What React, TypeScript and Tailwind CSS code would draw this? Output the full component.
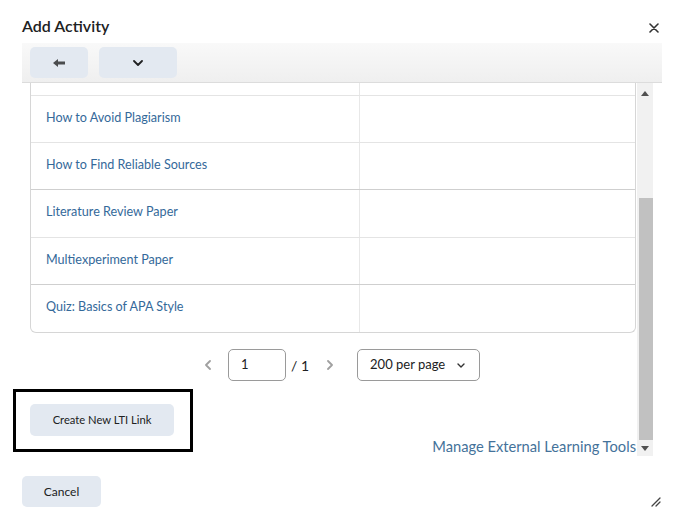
import { ReactNode } from "react";

const rows = [
    { title: "How to Avoid Plagiarism", h: "h-[47px]", line: "border-[#e4e4e4]" },
    { title: "How to Find Reliable Sources", h: "h-[47px]", line: "border-[#cfcfcf]" },
    { title: "Literature Review Paper", h: "h-[48px]", line: "border-[#e4e4e4]" },
    { title: "Multiexperiment Paper", h: "h-[47px]", line: "border-[#cfcfcf]" },
    { title: "Quiz: Basics of APA Style", h: "h-[47px]", line: "border-[#cfcfcf]" },
];

function GreyButton({ className, children }: { className: string, children: ReactNode }) {
    return <button className={`flex items-center justify-center rounded-[5px] bg-[#e3e9f1] text-[#202122] ${className}`}>
        {children}
    </button>
}

function Chevron({ dir, className }: { dir: "left" | "right" | "down", className?: string }) {
    const d = dir === "left" ? "M5 1 L1 5 L5 9" : dir === "right" ? "M1 1 L5 5 L1 9" : "M1 1 L5 5 L9 1";
    const w = dir === "down" ? 10 : 6;
    const h = dir === "down" ? 6 : 10;
    return <svg width={w} height={h} viewBox={`0 0 ${w} ${h}`} className={className}>
        <path d={d} fill="none" stroke="currentColor" strokeWidth="1.8" strokeLinecap="round" strokeLinejoin="round" />
    </svg>
}

export default function App() {
    return <div className="relative w-[680px] h-[522px] bg-white overflow-hidden font-['Lato','Liberation_Sans',sans-serif]">
        {/* header */}
        <div className="flex items-start justify-between pl-[22px] pr-[21px] pt-[17px] h-[43px]">
            <h1 className="text-[16px] font-semibold text-[#202122] leading-[18px]">Add Activity</h1>
            <svg width="10" height="10" viewBox="0 0 10 10" className="mt-[6px]">
                <path d="M1 1 L9 9 M9 1 L1 9" stroke="#333" strokeWidth="1.6" strokeLinecap="round" />
            </svg>
        </div>

        {/* toolbar */}
        <div className="ml-[22px] w-[640px] h-[40px] flex items-center gap-[11px] pl-[8px] bg-gradient-to-b from-[#f9f9f9] to-[#efefef] border-b border-[#dcdcdc]">
            <GreyButton className="w-[58px] h-[31px]">
                <svg width="12" height="8" viewBox="0 0 12 8">
                    <path d="M0 4 L5 0 V2.5 H12 V5.5 H5 V8 Z" fill="#4a4c4e" />
                </svg>
            </GreyButton>
            <GreyButton className="w-[78px] h-[31px] text-[#3a3c3e]">
                <Chevron dir="down" />
            </GreyButton>
        </div>

        {/* scrolling body */}
        <div className="ml-[22px] flex h-[373px]">
            <div className="w-[615px]">
                <div className="ml-[8px] w-[606px] border-x border-b border-[#d6d6d6] rounded-b-[6px]">
                    <div className="h-[13px] flex border-b border-[#e4e4e4]">
                        <div className="w-[329px] border-r border-[#e8e8e8]" />
                    </div>
                    {rows.map((row, i) =>
                        <div key={i} className={`flex ${row.h} ${i < rows.length - 1 ? `border-b ${row.line}` : ""}`}>
                            <div className="w-[329px] border-r border-[#e8e8e8] flex items-center pl-[15px] pb-[2px]">
                                <a className="text-[12.6px] text-[#34699a] leading-none">{row.title}</a>
                            </div>
                            <div className="flex-1" />
                        </div>
                    )}
                </div>

                {/* pagination */}
                <div className="flex items-center mt-[16px] h-[32px] pl-[183px] text-[#202122]">
                    <Chevron dir="left" className="text-[#a0a0a0]" />
                    <div className="ml-[17px] w-[58px] h-[32px] rounded-[5px] border border-[#9a9a9a] flex items-center pl-[12px] text-[13px]">1</div>
                    <span className="ml-[5px] text-[14px]">/ 1</span>
                    <Chevron dir="right" className="ml-[18px] text-[#a0a0a0]" />
                    <div className="ml-[24px] w-[123px] h-[32px] rounded-[5px] border border-[#9a9a9a] flex items-center justify-between pl-[12px] pr-[14px] text-[13px]">
                        <span>200 per page</span>
                        <svg width="8" height="5" viewBox="0 0 8 5">
                            <path d="M1 1 L4 4 L7 1" fill="none" stroke="#333" strokeWidth="1.4" strokeLinecap="round" strokeLinejoin="round" />
                        </svg>
                    </div>
                </div>

                {/* create link */}
                <div className="relative ml-[8px] mt-[23px] w-[144px]">
                    <GreyButton className="w-[144px] h-[32px] text-[11.2px]">Create New LTI Link</GreyButton>
                    <span className="absolute left-[-17px] top-[-15px] w-[180px] h-[63px] border-[3px] border-black pointer-events-none" />
                </div>

                <div className="flex justify-end pr-[1px] mt-[0px] h-[20px] items-center">
                    <a className="text-[14.7px] text-[#44729a] leading-none">Manage External Learning Tools</a>
                </div>
            </div>

            {/* scrollbar */}
            <div className="w-[16px] bg-[#f1f1f1] flex flex-col items-center">
                <svg width="8" height="5" viewBox="0 0 8 5" className="mt-[8px]">
                    <path d="M0 5 L4 0 L8 5 Z" fill="#505050" />
                </svg>
                <div className="w-[14px] ml-[2px] mt-[102px] h-[242px] bg-[#c1c1c1]" />
                <svg width="8" height="5" viewBox="0 0 8 5" className="mt-[6px]">
                    <path d="M0 0 L8 0 L4 5 Z" fill="#505050" />
                </svg>
            </div>
        </div>

        {/* footer */}
        <div className="ml-[22px] mt-[20px]">
            <GreyButton className="w-[79px] h-[31px] text-[12px]">Cancel</GreyButton>
        </div>

        <svg width="10" height="10" viewBox="0 0 10 10" className="absolute left-[651px] top-[497px]">
            <path d="M1 9 L9 1 M5 9 L9 5" stroke="#444" strokeWidth="1.3" strokeLinecap="round" />
        </svg>
    </div>
}
